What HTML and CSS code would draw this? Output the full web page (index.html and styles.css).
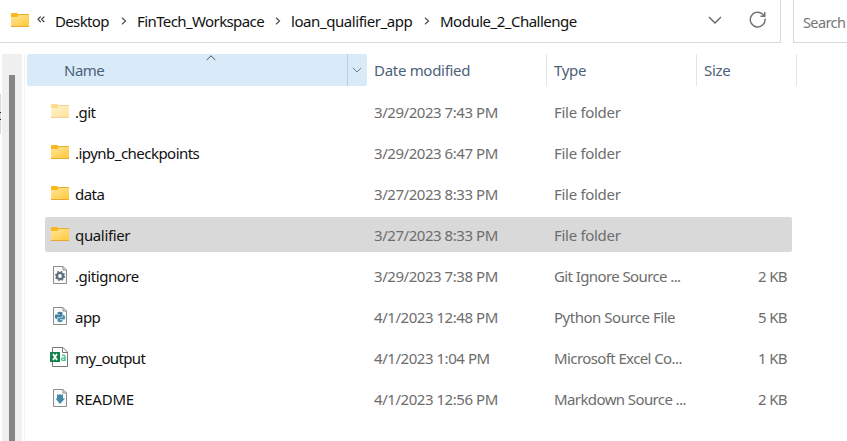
FILE: index.html
```html
<!DOCTYPE html>
<html lang="en">
<head>
<meta charset="utf-8">
<title>Module_2_Challenge</title>
<link rel="stylesheet" href="styles.css">
</head>
<body>
<svg class="defs" aria-hidden="true">
  <defs>
    <linearGradient id="gold" x1="0" y1="0" x2="1" y2="1"><stop offset="0" stop-color="#ffe69b"/><stop offset="1" stop-color="#ffc939"/></linearGradient>
    <symbol id="folder" viewBox="0 0 18 14"><path d="M0 13V1Q0 0 1 0H6L8 1.5V5H0Z" fill="#f8b81d"/><path d="M0 4H6L8 2H18V13H0Z" fill="url(#gold)"/><path d="M8 1.5H18" stroke="#e9ae2b"/><path d="M0 13.5H18" stroke="#e7a82b"/></symbol>
    <symbol id="page" viewBox="0 0 14 18"><path d="M.5 .5H10L13.5 4V17.5H.5Z" fill="#fafafa" stroke="#8d8d8d"/><path d="M10 .5V4H13.5" fill="none" stroke="#8d8d8d"/></symbol>
  </defs>
</svg>
<header class="top">
  <div class="address">
    <svg class="folder"><use href="#folder"/></svg>
    <svg class="laquo" viewBox="0 0 8 7"><path d="M3.7 .7L1 3.3 3.7 6M7.3 .7L4.6 3.3 7.3 6"/></svg>
    <span class="crumb c1">Desktop</span><svg class="sep" viewBox="0 0 6 8"><path d="M1 .7L4.5 4 1 7.3"/></svg>
    <span class="crumb c2">FinTech_Workspace</span><svg class="sep" viewBox="0 0 6 8"><path d="M1 .7L4.5 4 1 7.3"/></svg>
    <span class="crumb c3">loan_qualifier_app</span><svg class="sep" viewBox="0 0 6 8"><path d="M1 .7L4.5 4 1 7.3"/></svg>
    <span class="crumb c4">Module_2_Challenge</span>
    <svg class="drop" viewBox="0 0 14 8"><path d="M1 1L7 7 13 1"/></svg>
    <svg class="refresh" viewBox="0 0 18 18"><path d="M16 7.5A7.4 7.4 0 1 1 13.5 3L15.5 5M15.8 1V5.2H11.5"/></svg>
  </div>
  <div class="search">Search</div>
</header>
<main class="body">
  <div class="gutter"><div class="edge"><i></i><i></i></div><div class="track"><div class="thumb"></div></div></div>
  <section class="files">
    <div class="cols heads">
      <div class="head name"><span>Name</span><svg class="sort" viewBox="0 0 10 6"><path d="M.7 5L5 .8 9.3 5"/></svg><div class="filter"><svg viewBox="0 0 10 6"><path d="M.8 .8L5 5 9.2 .8"/></svg></div></div>
      <div class="head date">Date modified</div><div class="head type">Type</div><div class="head size">Size</div>
    </div>
    <div class="row dir"><div class="n"><svg class="folder faded"><use href="#folder"/></svg><span class="f1">.git</span></div><div class="d">3/29/2023 7:43 PM</div><div class="t">File folder</div><div class="s"></div></div>
    <div class="row dir"><div class="n"><svg class="folder"><use href="#folder"/></svg><span class="f2">.ipynb_checkpoints</span></div><div class="d">3/29/2023 6:47 PM</div><div class="t">File folder</div><div class="s"></div></div>
    <div class="row dir"><div class="n"><svg class="folder"><use href="#folder"/></svg><span class="f3">data</span></div><div class="d">3/27/2023 8:33 PM</div><div class="t">File folder</div><div class="s"></div></div>
    <div class="row dir selected"><div class="n"><svg class="folder"><use href="#folder"/></svg><span class="f4">qualifier</span></div><div class="d">3/27/2023 8:33 PM</div><div class="t">File folder</div><div class="s"></div></div>
    <div class="row"><div class="n"><svg class="doc" viewBox="0 0 14 18"><use href="#page"/><circle cx="7" cy="10" r="3" fill="none" stroke="#5b6d78" stroke-width="2.2"/><circle cx="7" cy="10" r="4.4" fill="none" stroke="#5b6d78" stroke-width="1.3" stroke-dasharray="1.73 1.73"/></svg><span class="f5">.gitignore</span></div><div class="d">3/29/2023 7:38 PM</div><div class="t">Git Ignore Source ...</div><div class="s">2 KB</div></div>
    <div class="row"><div class="n"><svg class="doc" viewBox="0 0 14 18"><use href="#page"/><path d="M4.5 5.5Q7 4 9.5 5.5V9Q9 10 8 10H5Q4 10 4 12H3Q1 10 2.5 7.5H7V7H4.5Z" fill="#3f7f9f"/><path d="M9.5 14.5Q7 16 4.5 14.5V11.5Q5 10.5 6 10.5H9Q10 10 10 8H11Q13 10 11.5 12.5H7V13H9.5Z" fill="#4c91b0"/></svg><span class="f6">app</span></div><div class="d">4/1/2023 12:48 PM</div><div class="t py">Python Source File</div><div class="s">5 KB</div></div>
    <div class="row"><div class="n"><svg class="excel" viewBox="0 0 18 20"><path d="M2.5 .5H13L17.5 5V19.5H2.5Z" fill="#fff" stroke="#777"/><path d="M12.5 .5V5.5H17.5" fill="none" stroke="#777"/><path d="M0 5H10V15H0Z" fill="#15804a"/><path d="M3 7L7 13M7 7L3 13" stroke="#fff" stroke-width="1.8"/><path d="M12 8.5Q15 7.5 15 10V14M15 11Q11.5 10.5 11.5 12.5Q12.5 14.5 15 12.5" fill="none" stroke="#4bca8d" stroke-width="1.5"/></svg><span class="f7">my_output</span></div><div class="d">4/1/2023 1:04 PM</div><div class="t">Microsoft Excel Co...</div><div class="s">1 KB</div></div>
    <div class="row"><div class="n"><svg class="doc" viewBox="0 0 14 18"><use href="#page"/><path d="M4 5L5.5 6 7 5 8.5 6 10 5V9.5H12L7 15 2.5 9.5H4Z" fill="#438bab"/></svg><span class="f8">README</span></div><div class="d">4/1/2023 12:56 PM</div><div class="t">Markdown Source ...</div><div class="s">2 KB</div></div>
  </section>
</main>
</body>
</html>
```

FILE: styles.css
```css
* { box-sizing: border-box; }
body { margin: 0; width: 847px; height: 441px; overflow: hidden; background: #fff; color: #111; font: 15px/20px "Noto Sans", "Open Sans", sans-serif; letter-spacing: -.6px; white-space: nowrap; }
svg { display: block; flex: none; fill: none; }
.defs { position: absolute; width: 0; height: 0; }
.top { display: flex; height: 43px; gap: 12px; }
.address { display: flex; align-items: center; width: 781px; padding: 0 13px 2px 11px; border: solid #d9d9d9; border-width: 0 1px 1px 0; }
.folder { width: 18px; height: 14px; }
.laquo { width: 8px; height: 7px; margin: 0 10px 2px 8px; stroke: #333; stroke-width: 1.1; }
.sep { width: 6px; height: 8px; margin: 1px 10px 0 11px; stroke: #555; stroke-width: 1.3; }
.crumb { flex: none; margin-top: 1px; }
.c1 { width: 55px; letter-spacing: -.65px; } .c2 { width: 127px; } .c3 { width: 122px; letter-spacing: -.43px; } .c4 { width: 138px; letter-spacing: -.5px; }
.drop { width: 14px; height: 8px; margin-left: auto; stroke: #666; stroke-width: 1.4; }
.refresh { width: 18px; height: 18px; margin-left: 27px; stroke: #707070; stroke-width: 1.4; }
.search { flex: 1; border: solid #d9d9d9; border-width: 0 0 1px 1px; padding: 12px 0 0 9px; color: #767676; font-size: 14.5px; overflow: hidden; }
.body { display: flex; height: 398px; padding-top: 11px; }
.gutter { display: flex; width: 25px; border-right: 1px solid #f3f3f3; }
.edge { width: 1px; height: 40px; margin: 40px 1px 0 0; background: #d8d8d8; padding-top: 18px; }
.edge i { display: block; width: 1px; height: 1px; background: #222; margin-bottom: 6px; }
.track { width: 20px; background: #efefef; padding: 21px 5px 0 7px; }
.thumb { width: 6px; height: 100%; background: #868686; }
.files { width: 770px; margin-left: 2px; }
.cols { display: grid; grid-template-columns: 340px 180px 150px 100px; height: 32px; margin-bottom: 8px; }
.head { padding: 6px 0 0 7px; border-right: 1px solid #e5e5e5; color: #4c607a; letter-spacing: -.3px; }
.head.name { display: flex; position: relative; padding: 0 0 0 37px; background: #d9eaf9; border: 0; border-radius: 2px; letter-spacing: -.5px; }
.name span { margin-top: 6px; }
.sort { position: absolute; left: 179px; top: 1px; width: 10px; height: 6px; stroke: #555; }
.filter { display: flex; align-items: center; justify-content: center; width: 20px; margin-left: auto; border-left: 1px solid #bdcfdf; }
.filter svg { width: 10px; height: 6px; margin: 0 2px 0 0; stroke: #6d7d8c; }
.row { display: grid; grid-template-columns: 329px 180px 150px 83px; width: 747px; height: 35px; margin: 0 0 6px 18px; align-items: center; border-radius: 2px; color: #6d6d6d; }
.selected { background: #d9d9d9; }
.n { display: flex; align-items: center; color: #111; letter-spacing: -.53px; }
.n svg { margin: 0 6px 1px; }
.n .doc { width: 14px; height: 18px; margin: 0 8px 1px; }
.n .excel { width: 18px; height: 20px; margin: 0 7px 1px 5px; }
.n .f4 { letter-spacing: -.35px; }
.n .f5 { letter-spacing: -.45px; }
.n .f7 { letter-spacing: -.65px; }
.n .f8 { letter-spacing: -.2px; }
.d { letter-spacing: -.45px; }
.dir .t { letter-spacing: -.3px; }
.t.py { letter-spacing: -.48px; }
.faded { opacity: .5; }
.s { text-align: right; }
```
